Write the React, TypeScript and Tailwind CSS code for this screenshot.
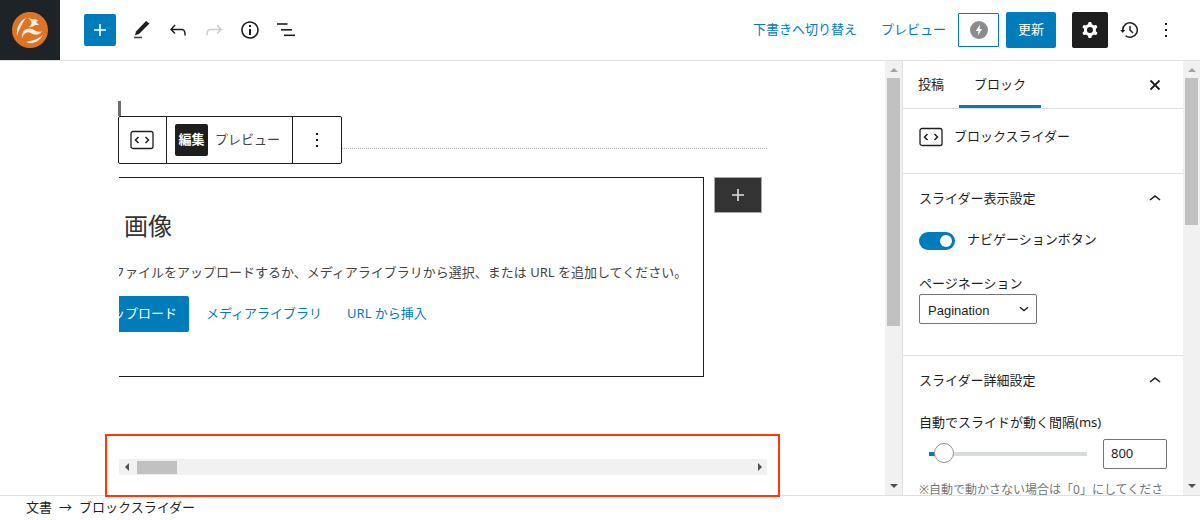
import type { ReactNode } from "react";

function Icon({ d, size = 24, className = "", evenOdd = false }: { d: string; size?: number; className?: string; evenOdd?: boolean }) {
  return (
    <svg width={size} height={size} viewBox="0 0 24 24" className={className} fill="currentColor" aria-hidden>
      <path d={d} fillRule={evenOdd ? "evenodd" : "nonzero"} clipRule={evenOdd ? "evenodd" : "nonzero"} />
    </svg>
  );
}

const PLUS = "M18 11.2h-5.2V6h-1.6v5.2H6v1.6h5.2V18h1.6v-5.2H18z";
const UNDO = "M18.3 11.7c-.6-.6-1.4-.9-2.3-.9H6.7l2.9-3.3-1.1-1-4.5 5L8.5 16l1-1-2.7-2.7H16c.5 0 .9.2 1.3.5 1 1 1 3.4 1 4.5v.3h1.5v-.2c0-1.5 0-4.3-1.5-5.7z";
const REDO = "M15.6 6.5l-1.1 1 2.9 3.3H8c-.9 0-1.7.3-2.3.9-1.4 1.5-1.4 4.2-1.4 5.6v.2h1.5v-.3c0-1.1 0-3.5 1-4.5.3-.3.7-.5 1.3-.5h9.2L14.5 15l1.1 1.1 4.6-4.6-4.6-5z";
const INFO = "M12 3.2c-4.8 0-8.8 3.9-8.8 8.8 0 4.8 3.9 8.8 8.8 8.8 4.8 0 8.8-3.9 8.8-8.8 0-4.8-4-8.8-8.8-8.8zm0 16c-4 0-7.2-3.3-7.2-7.2C4.8 8 8 4.8 12 4.8s7.2 3.3 7.2 7.2c0 4-3.2 7.2-7.2 7.2zM11 17h2v-6h-2v6zm0-8h2V7h-2v2z";
const MORE = "M13 19h-2v-2h2v2zm0-6h-2v-2h2v2zm0-6h-2V5h2v2z";
const CHEVRON_UP = "M6.5 12.4L12 8l5.5 4.4-.9 1.2L12 10l-4.5 3.6-1-1.2z";
const BACKUP = "M5.5 12h1.75l-2.5 3-2.5-3H4a8 8 0 113.134 6.35l.907-1.194A6.5 6.5 0 105.5 12zm9.53 1.97l-2.28-2.28V8.5a.75.75 0 00-1.5 0V12a.747.747 0 00.218.529l2.5 2.5a.75.75 0 101.06-1.061z";
const COG = "M10.289 4.836A1 1 0 0111.275 4h1.306a1 1 0 01.987.836l.244 1.466c.787.26 1.503.679 2.108 1.218l1.393-.522a1 1 0 011.216.437l.653 1.13a1 1 0 01-.23 1.273l-1.148.944a6.025 6.025 0 010 2.435l1.149.946a1 1 0 01.23 1.272l-.653 1.13a1 1 0 01-1.216.437l-1.394-.522c-.605.54-1.32.958-2.108 1.218l-.244 1.466a1 1 0 01-.987.836h-1.306a1 1 0 01-.986-.836l-.244-1.466a5.995 5.995 0 01-2.108-1.218l-1.394.522a1 1 0 01-1.217-.436l-.653-1.131a1 1 0 01.23-1.272l1.149-.946a6.026 6.026 0 010-2.435l-1.148-.944a1 1 0 01-.23-1.272l.653-1.131a1 1 0 011.217-.437l1.393.522a5.994 5.994 0 012.108-1.218l.244-1.466zM14.929 12a3 3 0 11-6 0 3 3 0 016 0z";

function Logo() {
  return (
    <svg width="36" height="36" viewBox="0 0 36 36" aria-hidden>
      <circle cx="18" cy="18" r="18" fill="#dd7426" />
      <g fill="#fbeee4">
        <path d="M14 6C8 9 4 15 5 24 7 17 10 12 14 6z" />
        <path d="M10 26C9 19 15 15 20 17c4 2 6 4 10 2-3 5-8 4-11 2-4-2-7 0-9 5z" />
        <path d="M14 30c6 3 13 0 17-7-5 4-11 6-17 7z" />
        <path d="M16 6c5 2 8 0 10 3l-2 1 3 3h-4c-2 2-4 2-6 2 3-2 4-6-1-9z" />
      </g>
    </svg>
  );
}

function ShortcodeIcon() {
  return (
    <svg width="24" height="20" viewBox="0 0 24 20" fill="none" stroke="#1e1e1e" aria-hidden>
      <rect x="1" y="1.5" width="22" height="17" rx="2" strokeWidth="1.3" />
      <path d="M8.5 7l-3 3 3 3M15.5 7l3 3-3 3" strokeWidth="1.5" />
    </svg>
  );
}

function ListViewIcon() {
  return (
    <svg width="24" height="24" viewBox="0 0 24 24" fill="#1e1e1e" aria-hidden>
      <rect x="3" y="5.2" width="10.5" height="1.6" />
      <rect x="7" y="11" width="11" height="1.6" />
      <rect x="10" y="16.5" width="11" height="1.6" />
    </svg>
  );
}

function PencilIcon() {
  return (
    <svg width="24" height="24" viewBox="0 0 24 24" fill="#1e1e1e" aria-hidden>
      <path d="M6 17.3l1-3.8L17 3l3.5 2.5L10 16z" />
      <rect x="5" y="18.7" width="8" height="1.6" fill="#444" />
    </svg>
  );
}

function Triangle({ dir }: { dir: "up" | "down" | "left" | "right" }) {
  const points = { up: "4,1 8,5 0,5", down: "0,1 8,1 4,5", left: "5,0 5,8 1,4", right: "1,0 1,8 5,4" }[dir];
  return (
    <svg width={dir === "up" || dir === "down" ? 8 : 6} height={dir === "up" || dir === "down" ? 6 : 8} aria-hidden>
      <polygon points={points} fill={dir === "up" ? "#a3a3a3" : "#505050"} />
    </svg>
  );
}

function VScrollbar({ thumb }: { thumb: string }) {
  return (
    <div className="flex w-[17px] shrink-0 flex-col items-center bg-[#f1f1f1]">
      <div className="flex h-[17px] items-center justify-center pt-[1px]">
        <Triangle dir="up" />
      </div>
      <div className={`w-[13px] bg-[#c1c1c1] ${thumb}`} />
      <div className="flex-1" />
      <div className="flex h-[17px] items-center justify-center pb-[2px]">
        <Triangle dir="down" />
      </div>
    </div>
  );
}

function SectionTitle({ children }: { children: ReactNode }) {
  return (
    <div className="flex h-[18px] items-center justify-between">
      <span className="text-[13px] text-[#1e1e1e]">{children}</span>
      <Icon d={CHEVRON_UP} className="text-[#1e1e1e]" />
    </div>
  );
}

export default function App() {
  return (
    <div
      className="relative flex h-[520px] w-[1200px] flex-col overflow-hidden bg-white text-[#1e1e1e]"
      style={{ fontFamily: '"Noto Sans", "Noto Sans CJK JP", sans-serif' }}
    >
      {/* top bar */}
      <header className="flex h-[61px] shrink-0 items-center border-b border-[#e0e0e0]">
        <div className="flex h-[60px] w-[60px] shrink-0 items-center justify-center bg-[#1d2327]">
          <Logo />
        </div>
        <div className="ml-[24px] flex h-[32px] w-[32px] items-center justify-center rounded-[2px] bg-[#007cba] text-white">
          <Icon d={PLUS} />
        </div>
        <div className="ml-[13px] flex items-center gap-[12px]">
          <PencilIcon />
          <Icon d={UNDO} className="ml-[1px] text-[#1e1e1e]" />
          <Icon d={REDO} className="text-[#cccccc]" />
          <Icon d={INFO} className="text-[#1e1e1e]" />
          <ListViewIcon />
        </div>
        <div className="flex-1" />
        <a className="text-[13px] text-[#007cba]">下書きへ切り替え</a>
        <a className="ml-[24px] text-[13px] text-[#007cba]">プレビュー</a>
        <div className="ml-[12px] flex h-[34px] w-[41px] items-center justify-center rounded-[1px] border border-[#007cba]">
          <svg width="20" height="20" viewBox="0 0 20 20" aria-hidden>
            <circle cx="10" cy="10" r="9" fill="#888c8f" />
            <path d="M11 4.5L6.8 11h2.6l-.6 4.5L13.2 9h-2.6z" fill="#fff" />
          </svg>
        </div>
        <div className="ml-[7px] flex h-[36px] w-[50px] items-center justify-center rounded-[2px] bg-[#007cba] text-[13px] text-white">
          更新
        </div>
        <div className="ml-[16px] flex h-[36px] w-[36px] items-center justify-center rounded-[2px] bg-[#1e1e1e] text-white">
          <Icon d={COG} evenOdd />
        </div>
        <div className="ml-[10px] flex w-[24px] justify-center">
          <Icon d={BACKUP} />
        </div>
        <div className="ml-[11px] mr-[23px] flex w-[24px] translate-x-[1px] justify-center">
          <Icon d={MORE} />
        </div>
      </header>

      <main className="flex min-h-0 flex-1">
        {/* editor canvas */}
        <div className="flex w-[885px] shrink-0 flex-col pl-[118px] pt-[40px]">
          <div className="h-[15px] w-[3px] bg-[#6e6e6e]" />
          <div className="flex w-[649px] items-start">
            <div className="flex h-[48px] w-[224px] shrink-0 items-stretch rounded-[2px] border border-[#1e1e1e] bg-white">
              <div className="flex w-[48px] items-center justify-center border-r border-[#1e1e1e] pr-[2px]">
                <ShortcodeIcon />
              </div>
              <div className="flex w-[126px] items-center border-r border-[#1e1e1e] pl-[8px]">
                <span className="flex h-[32px] w-[33px] items-center justify-center rounded-[2px] bg-[#1e1e1e] text-[13px] font-bold text-white">
                  編集
                </span>
                <span className="ml-[7px] text-[13px] text-[#444]">プレビュー</span>
              </div>
              <div className="flex flex-1 items-center justify-center">
                <Icon d={MORE} />
              </div>
            </div>
            <div className="mt-[32px] flex-1 border-t border-dotted border-[#b0b0b0]" />
          </div>
          <div className="mt-[13px] flex items-start">
            <div className="ml-[1px] h-[200px] w-[585px] overflow-hidden border-y border-r border-[#1e1e1e]">
              <div className="ml-[-7px]">
                <div className="ml-[12px] mt-[28px] text-[24px] leading-[40px] text-[#333]">画像</div>
                <div className="mt-[16px] whitespace-nowrap text-[13px] leading-[20px] text-[#444]">
                  ファイルをアップロードするか、メディアライブラリから選択、または URL を追加してください。
                </div>
                <div className="mt-[14px] flex items-center">
                  <div className="flex h-[36px] w-[77px] items-center justify-end overflow-hidden rounded-[2px] bg-[#007cba] pr-[12px] text-[13px] whitespace-nowrap text-white">
                    アップロード
                  </div>
                  <a className="ml-[17px] text-[13px] text-[#007cba]">メディアライブラリ</a>
                  <a className="ml-[25px] text-[13px] text-[#007cba]">URL から挿入</a>
                </div>
              </div>
            </div>
            <div className="ml-[10px] flex h-[36px] w-[48px] items-center justify-center border border-[#a8a8a8] bg-[#333] text-[#e0e0e0]">
              <Icon d={PLUS} />
            </div>
          </div>
          {/* horizontal scrollbar */}
          <div className="ml-[1px] mt-[82px] flex h-[16px] w-[648px] items-center bg-[#f1f1f1]">
            <div className="ml-[5px] flex">
              <Triangle dir="left" />
            </div>
            <div className="ml-[7px] h-[13px] w-[40px] bg-[#c1c1c1]" />
            <div className="flex-1" />
            <div className="mr-[4px] flex">
              <Triangle dir="right" />
            </div>
          </div>
        </div>

        <VScrollbar thumb="h-[248px]" />

        {/* settings sidebar */}
        <aside className="w-[281px] shrink-0 overflow-hidden border-l border-[#e0e0e0]">
          <div className="flex h-[48px] items-stretch border-b border-[#e0e0e0] pr-[18px]">
            <div className="flex w-[56px] items-center justify-center text-[13px] text-[#1e1e1e]">投稿</div>
            <div className="flex w-[82px] items-center justify-center border-b-[3px] border-[#007cba] pt-[3px] text-[13px] text-[#1e1e1e]">
              ブロック
            </div>
            <div className="flex-1" />
            <div className="flex items-center">
              <svg width="20" height="20" viewBox="0 0 20 20" stroke="#1e1e1e" strokeWidth="1.8" fill="none" aria-hidden>
                <path d="M5.5 5.5l9 9M14.5 5.5l-9 9" />
              </svg>
            </div>
          </div>
          <div className="flex h-[65px] items-center gap-[11px] border-b border-[#e0e0e0] pb-[8px] pl-[16px]">
            <ShortcodeIcon />
            <span className="text-[13px] text-[#1e1e1e]">ブロックスライダー</span>
          </div>
          <div className="h-[182px] border-b border-[#e0e0e0] px-[16px] pt-[16px]">
            <SectionTitle>スライダー表示設定</SectionTitle>
            <div className="mt-[24px] flex items-center gap-[13px]">
              <div className="flex h-[18px] w-[36px] items-center justify-end rounded-full bg-[#007cba] pr-[3px]">
                <span className="h-[12px] w-[12px] rounded-full bg-white" />
              </div>
              <span className="ml-[-1px] mt-[-2px] text-[13px] text-[#1e1e1e]">ナビゲーションボタン</span>
            </div>
            <div className="mb-[2px] mt-[24px] text-[13px] leading-[18px] text-[#1e1e1e]">ページネーション</div>
            <div className="flex h-[30px] w-[118px] items-center justify-between rounded-[2px] border border-[#757575] pl-[8px] pr-[6px] text-[13px]">
              <span className="h-[17px] overflow-hidden leading-[20px]" style={{ fontFamily: '"Liberation Sans", sans-serif' }}>
                Pagination
              </span>
              <svg width="12" height="12" viewBox="0 0 12 12" fill="none" stroke="#1e1e1e" strokeWidth="1.3" aria-hidden>
                <path d="M2 4.2L6 7.6l4-3.4" />
              </svg>
            </div>
          </div>
          <div className="px-[16px] pt-[16px]">
            <SectionTitle>スライダー詳細設定</SectionTitle>
            <div className="mt-[23px] text-[13px] leading-[18px] text-[#1e1e1e]">自動でスライドが動く間隔(ms)</div>
            <div className="mt-[8px] flex h-[30px] items-center">
              <div className="relative ml-[10px] flex h-[4px] w-[158px] bg-[#d7dade]">
                <div className="h-full w-[8px] bg-[#007cba]" />
                <span className="absolute left-[5px] top-[-9px] h-[20px] w-[20px] rounded-full border border-[#949494] bg-white" />
              </div>
              <div className="ml-[16px] flex h-[30px] w-[64px] items-center rounded-[2px] border border-[#757575] pl-[7px] text-[13px] text-[#1e1e1e]">
                800
              </div>
            </div>
            <div className="mt-[12px] whitespace-nowrap text-[12px] leading-[18px] text-[#757575]">
              ※自動で動かさない場合は「0」にしてくださ
            </div>
          </div>
        </aside>

        <VScrollbar thumb="h-[147px]" />
      </main>

      {/* breadcrumb */}
      <footer className="flex h-[25px] shrink-0 items-center border-t border-[#e0e0e0] bg-white pl-[26px] text-[13px] text-[#1e1e1e]">
        <span>文書</span>
        <span className="mx-[7px]">→</span>
        <span>ブロックスライダー</span>
      </footer>

      {/* red annotation */}
      <div className="pointer-events-none absolute left-[105px] top-[434px] h-[63px] w-[675px] border-2 border-[#fb3a06]" />
    </div>
  );
}
